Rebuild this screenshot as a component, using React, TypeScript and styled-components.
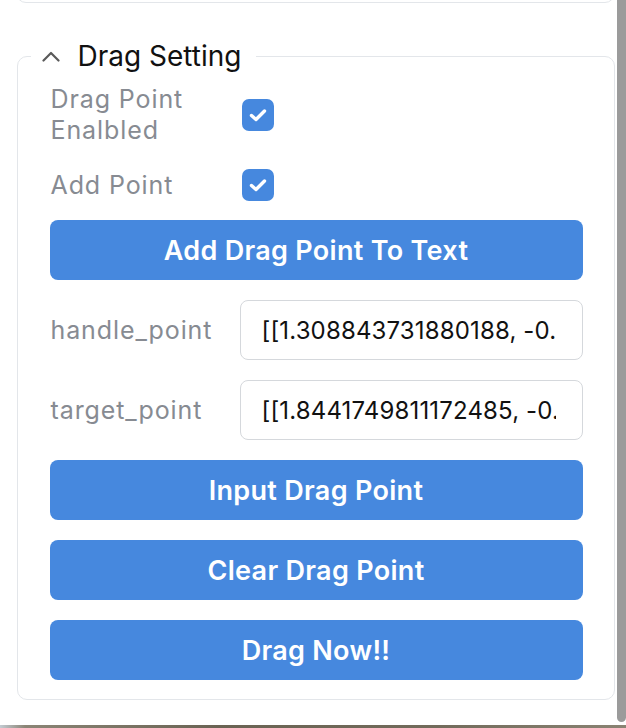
import React from "react";
import styled, { createGlobalStyle } from "styled-components";

const GlobalStyle = createGlobalStyle`
  html, body {
    margin: 0;
    padding: 0;
    background: #ffffff;
    font-family: Inter, "Noto Sans", "Liberation Sans", sans-serif;
  }
  * { box-sizing: border-box; }
`;

const Screen = styled.div`
  width: 626px;
  height: 728px;
  display: flex;
  flex-direction: column;
  overflow: hidden;
  background: #ffffff;
`;

const Main = styled.div`
  flex: 1;
  display: flex;
  flex-direction: row;
  min-height: 0;
`;

const Content = styled.div`
  flex: 1;
  padding-left: 17px;
  padding-right: 2px;
`;

const ScrollTrack = styled.div`
  width: 9px;
  padding-bottom: 3px;
  display: flex;
`;

const ScrollThumb = styled.div`
  flex: 1;
  background: #9b9b9b;
  border-radius: 0 0 5px 5px;
`;

const DesktopStrip = styled.div`
  height: 3px;
  background: linear-gradient(90deg, #c3cbd2 0%, #8b8576 4%, #6a6353 35%, #726b5b 70%, #8a8373 100%);
`;

const PrevCard = styled.div`
  height: 20px;
  margin-top: -17px;
  margin-left: -1px;
  border: 1.5px solid #e3e6ea;
  border-radius: 10px;
`;

const Group = styled.fieldset`
  margin: 37px 0 0 0;
  padding: 0 31.5px 19px 31.5px;
  border: 1.5px solid #e3e6ea;
  border-radius: 10px;
  min-width: 0;
`;

const Legend = styled.legend`
  margin-left: -19px;
  padding: 0 15px 0 11px;
  display: flex;
  align-items: center;
  gap: 18px;
  font-size: 28px;
  line-height: 32px;
  color: #111111;
  font-weight: 400;
`;

const Stack = styled.div`
  display: flex;
  flex-direction: column;
  gap: 20px;
`;

const CheckRows = styled.div`
  display: flex;
  flex-direction: column;
  gap: 23px;
  padding-top: 12px;
  margin-bottom: -1px;
`;

const FieldRow = styled.div`
  display: grid;
  grid-template-columns: 190px minmax(0, 1fr);
  align-items: center;
`;

const Label = styled.span`
  font-size: 25px;
  line-height: 31px;
  letter-spacing: 0.9px;
  color: #878b92;
  padding-left: 1px;
  white-space: nowrap;
`;

const CheckBox = styled.span`
  width: 32px;
  height: 32px;
  margin-left: 2px;
  border-radius: 7px;
  background: #4688de;
  display: flex;
  align-items: center;
  justify-content: center;
`;

const TextInput = styled.input`
  width: 100%;
  height: 60px;
  padding: 0 26px 0 21px;
  border: 1.5px solid #d5d8dc;
  border-radius: 8px;
  font-family: inherit;
  font-size: 24px;
  letter-spacing: 0.15px;
  color: #111111;
  background: #ffffff;
  outline: none;
`;

const ActionButton = styled.button`
  height: 60px;
  border: none;
  border-radius: 8px;
  background: #4688de;
  color: #ffffff;
  font-family: inherit;
  font-size: 27px;
  letter-spacing: 0.3px;
  font-weight: 600;
  cursor: pointer;
`;

const Chevron = () => (
  <svg width="18" height="11" viewBox="0 0 18 11" aria-hidden="true">
    <polyline points="1.5,9.5 9,2 16.5,9.5" fill="none" stroke="#5a5a5a" strokeWidth="2.2" strokeLinecap="round" strokeLinejoin="round" />
  </svg>
);

const Check = () => (
  <svg width="32" height="32" viewBox="0 0 32 32" aria-hidden="true">
    <polyline points="9.5,16.5 14,20.5 22.5,12" fill="none" stroke="#ffffff" strokeWidth="3.4" strokeLinecap="round" strokeLinejoin="round" />
  </svg>
);

export default function App() {
  return (
    <>
      <GlobalStyle />
      <Screen>
        <Main>
          <Content>
            <PrevCard />
            <Group>
              <Legend>
                <Chevron />
                <span>Drag Setting</span>
              </Legend>
              <CheckRows>
                <FieldRow>
                  <Label>Drag Point<br />Enalbled</Label>
                  <CheckBox><Check /></CheckBox>
                </FieldRow>
                <FieldRow>
                  <Label>Add Point</Label>
                  <CheckBox><Check /></CheckBox>
                </FieldRow>
              </CheckRows>
              <Stack>
                <span />
                <ActionButton>Add Drag Point To Text</ActionButton>
                <FieldRow>
                  <Label>handle_point</Label>
                  <TextInput readOnly value="[[1.308843731880188, -0.5262711048126221]]" />
                </FieldRow>
                <FieldRow>
                  <Label>target_point</Label>
                  <TextInput readOnly value="[[1.8441749811172485, -0.3817214965820313]]" />
                </FieldRow>
                <ActionButton>Input Drag Point</ActionButton>
                <ActionButton>Clear Drag Point</ActionButton>
                <ActionButton>Drag Now!!</ActionButton>
              </Stack>
            </Group>
          </Content>
          <ScrollTrack>
            <ScrollThumb />
          </ScrollTrack>
        </Main>
        <DesktopStrip />
      </Screen>
    </>
  );
}
